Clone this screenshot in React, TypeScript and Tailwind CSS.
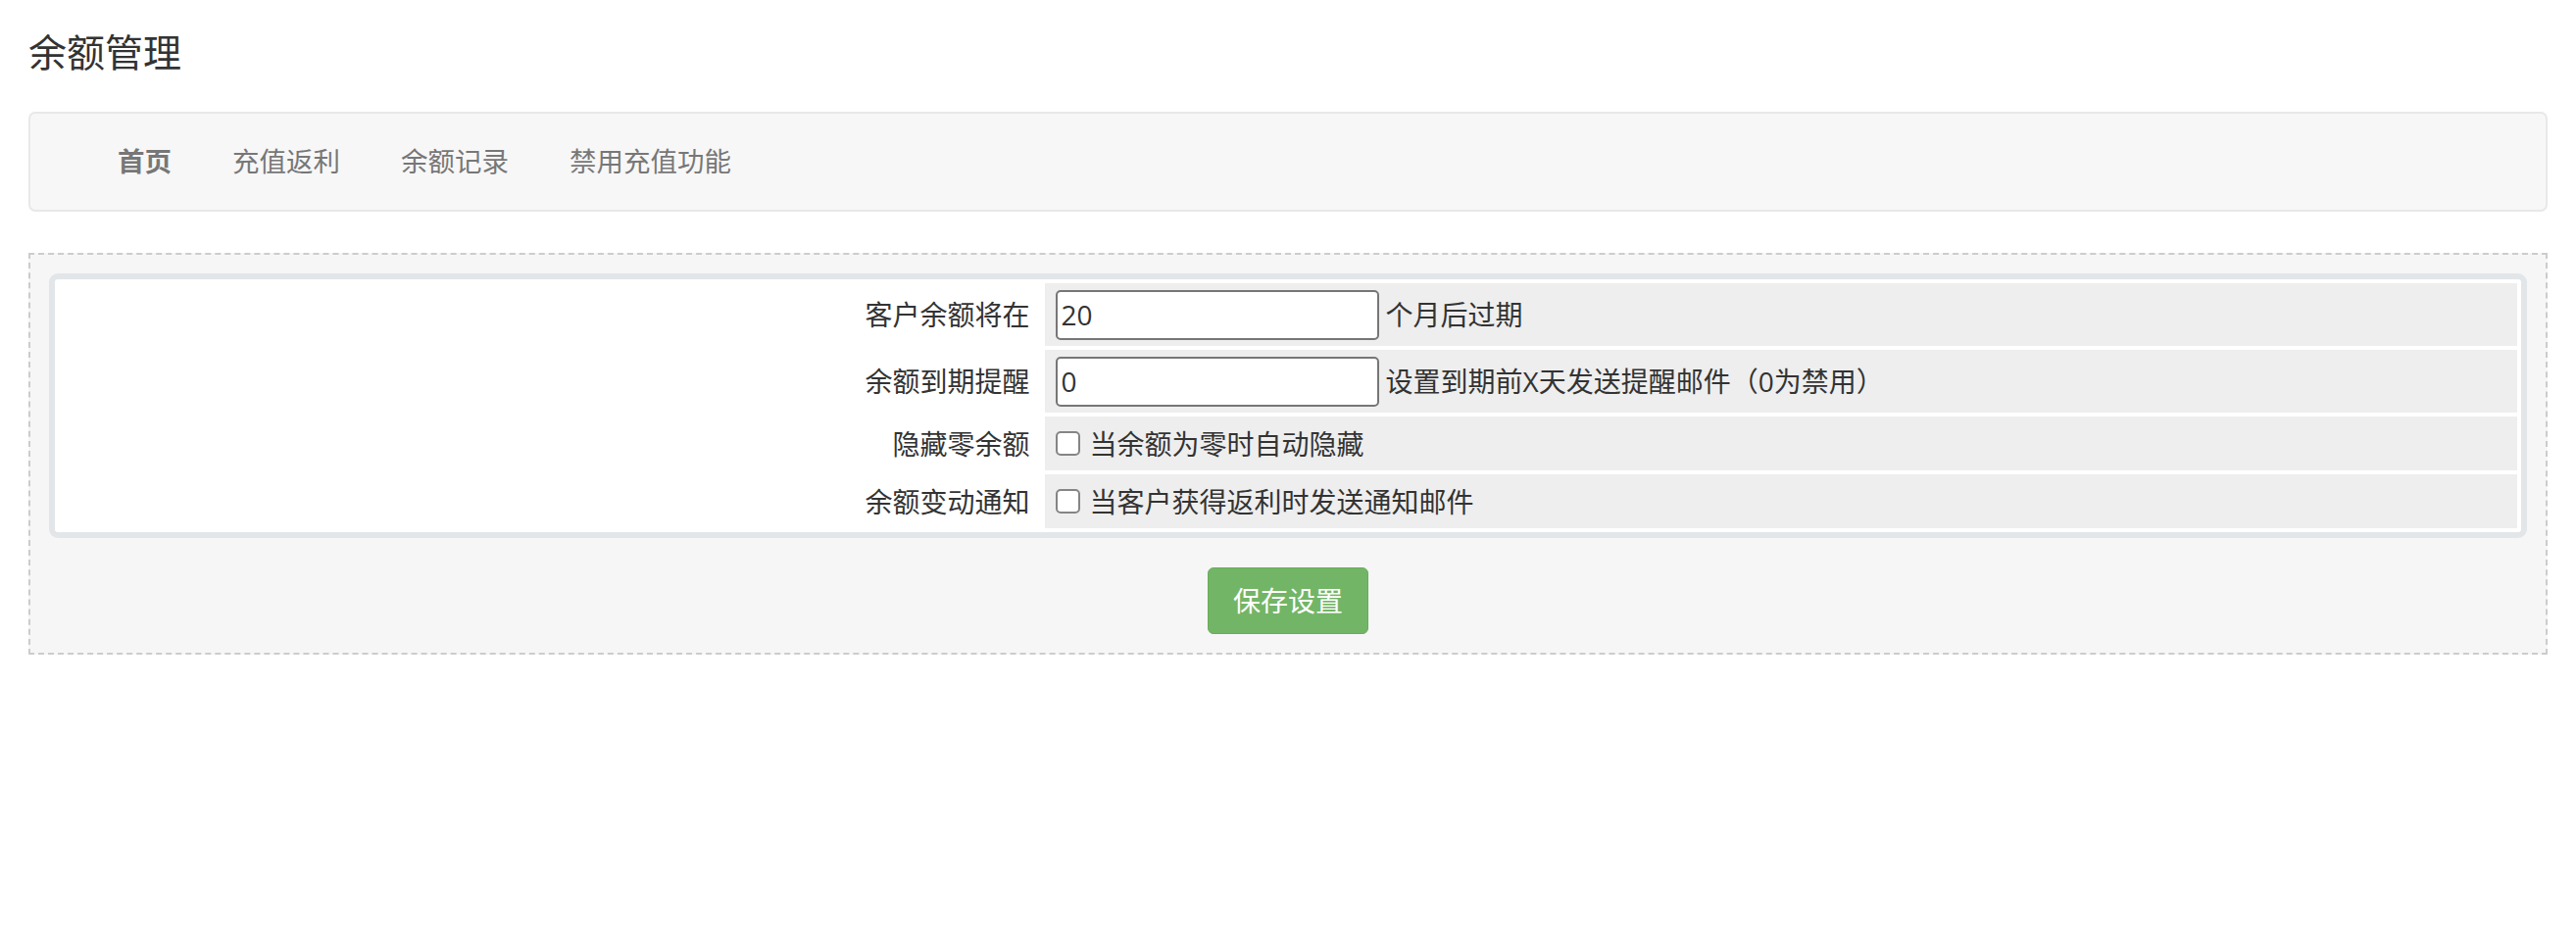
import { useState } from "react";

type Row = {
  label: string;
  kind: "input" | "check";
  value?: string;
  hint: string;
};

const rows: Row[] = [
  { label: "客户余额将在", kind: "input", value: "20", hint: "个月后过期" },
  { label: "余额到期提醒", kind: "input", value: "0", hint: "设置到期前X天发送提醒邮件（0为禁用）" },
  { label: "隐藏零余额", kind: "check", hint: "当余额为零时自动隐藏" },
  { label: "余额变动通知", kind: "check", hint: "当客户获得返利时发送通知邮件" },
];

const tabs = ["首页", "充值返利", "余额记录", "禁用充值功能"];

export default function App() {
  const [values, setValues] = useState<Record<number, string>>({ 0: "20", 1: "0" });
  const [checks, setChecks] = useState<Record<number, boolean>>({});

  return (
    <div className="min-h-screen bg-white px-[29px] font-['Open_Sans','Noto_Sans_CJK_SC',sans-serif] text-[#333]">
      {/* Page title */}
      <h1 className="pt-[24px] pb-[33px] text-[39px] font-normal leading-[57px] text-[#333]">余额管理</h1>

      {/* Tabs */}
      <div className="flex h-[102px] items-center rounded-[7px] border-2 border-[#e8e8e8] bg-[#f7f7f7] pl-[89px]">
        <ul className="flex gap-[62px] text-[27.5px] text-[#777]">
          {tabs.map((t, i) => (
            <li key={t} className={i === 0 ? "font-bold" : ""}>
              <a href="#">{t}</a>
            </li>
          ))}
        </ul>
      </div>

      {/* Settings form */}
      <form
        className="mt-[42px] border-2 border-dashed border-[#cccccc] bg-[#f6f6f6] p-[19px]"
        onSubmit={(e) => e.preventDefault()}
      >
        <div className="rounded-[9px] border-[6px] border-[#e3e6e9] bg-white">
          <table className="w-full border-separate border-spacing-[4px] text-[28px]">
            <tbody>
              {rows.map((r, i) => (
                <tr key={r.label}>
                  <td
                    className={`w-[40%] pr-[11px] text-right align-middle ${
                      r.kind === "input" ? "h-[64px]" : "h-[55px]"
                    }`}
                  >
                    {r.label}
                  </td>
                  <td className="bg-[#eeeeee] pl-[11px] align-middle">
                    {r.kind === "input" ? (
                      <div className="flex items-center">
                        <input
                          type="text"
                          value={values[i] ?? ""}
                          onChange={(e) => setValues({ ...values, [i]: e.target.value })}
                          className="h-[51px] w-[330px] rounded-[5px] border-2 border-[#767676] bg-white px-[4px] text-[28px] text-[#333] outline-none"
                        />
                        <span className="ml-[7px]">{r.hint}</span>
                      </div>
                    ) : (
                      <label className="flex items-center">
                        <input
                          type="checkbox"
                          checked={!!checks[i]}
                          onChange={(e) => setChecks({ ...checks, [i]: e.target.checked })}
                          className="h-[25px] w-[25px] appearance-none rounded-[5px] border-2 border-[#858585] bg-white checked:bg-[#0075ff]"
                        />
                        <span className="ml-[10px]">{r.hint}</span>
                      </label>
                    )}
                  </td>
                </tr>
              ))}
            </tbody>
          </table>
        </div>

        <div className="mt-[30px] flex justify-center">
          <button
            type="submit"
            className="h-[68px] w-[164px] rounded-[6px] border border-[#68ac5b] bg-[#73b566] text-[28px] text-white"
          >
            保存设置
          </button>
        </div>
      </form>
    </div>
  );
}
